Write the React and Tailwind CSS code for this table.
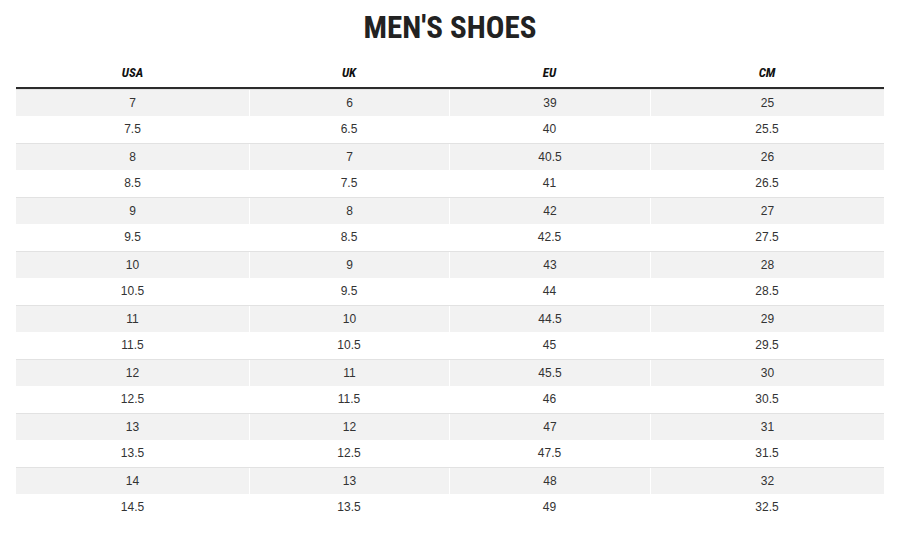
import React from "react";

const sizes = [
    ["7", "6", "39", "25"],
    ["7.5", "6.5", "40", "25.5"],
    ["8", "7", "40.5", "26"],
    ["8.5", "7.5", "41", "26.5"],
    ["9", "8", "42", "27"],
    ["9.5", "8.5", "42.5", "27.5"],
    ["10", "9", "43", "28"],
    ["10.5", "9.5", "44", "28.5"],
    ["11", "10", "44.5", "29"],
    ["11.5", "10.5", "45", "29.5"],
    ["12", "11", "45.5", "30"],
    ["12.5", "11.5", "46", "30.5"],
    ["13", "12", "47", "31"],
    ["13.5", "12.5", "47.5", "31.5"],
    ["14", "13", "48", "32"],
    ["14.5", "13.5", "49", "32.5"],
];

const headers = ["USA", "UK", "EU", "CM"];

const App = () => {
    return (
        <div className="min-h-screen bg-white font-['Liberation_Sans',Arial,sans-serif]">
            <h1 className="pt-[13px] text-center text-[31px] leading-[30px] font-bold text-[#222] font-['Roboto_Condensed',Roboto,sans-serif] [font-stretch:75%]">
                MEN'S SHOES
            </h1>

            <div className="w-[868px] mx-auto mt-[15px]">
                {/* Header */}
                <div className="grid grid-cols-[233px_200px_201px_234px] h-[31px] border-b-2 border-[#2b2b2b]">
                    {headers.map((h) => (
                        <div
                            key={h}
                            className="flex items-center justify-center text-[13px] font-bold italic text-[#111] font-['Roboto_Condensed',Roboto,sans-serif] [font-stretch:75%]"
                        >
                            {h}
                        </div>
                    ))}
                </div>

                {/* Rows */}
                {sizes.map((row, i) => {
                    const shaded = i % 2 === 0;
                    return (
                        <div
                            key={i}
                            className={
                                shaded
                                    ? "grid grid-cols-[233px_200px_201px_234px] h-[27px] bg-[#f2f2f2] border-t border-[#e2e2e2]"
                                    : "grid grid-cols-[233px_200px_201px_234px] h-[27px] bg-white"
                            }
                        >
                            {row.map((cell, j) => (
                                <div
                                    key={j}
                                    className={
                                        j > 0 && shaded
                                            ? "flex items-center justify-center pb-px text-[12px] text-[#333] border-l border-white"
                                            : "flex items-center justify-center pb-px text-[12px] text-[#333]"
                                    }
                                >
                                    {cell}
                                </div>
                            ))}
                        </div>
                    );
                })}
            </div>
        </div>
    );
};

export default App;
